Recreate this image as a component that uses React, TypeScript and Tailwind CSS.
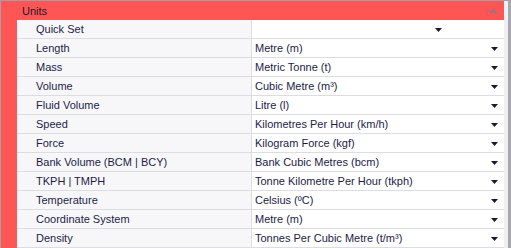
const rows: [string, string][] = [
  ['Quick Set', ''],
  ['Length', 'Metre (m)'],
  ['Mass', 'Metric Tonne (t)'],
  ['Volume', 'Cubic Metre (m³)'],
  ['Fluid Volume', 'Litre (l)'],
  ['Speed', 'Kilometres Per Hour (km/h)'],
  ['Force', 'Kilogram Force (kgf)'],
  ['Bank Volume (BCM | BCY)', 'Bank Cubic Metres (bcm)'],
  ['TKPH | TMPH', 'Tonne Kilometre Per Hour (tkph)'],
  ['Temperature', 'Celsius (ºC)'],
  ['Coordinate System', 'Metre (m)'],
  ['Density', 'Tonnes Per Cubic Metre (t/m³)'],
];

function DropArrow() {
  return (
    <svg width="7" height="4" viewBox="0 0 7 4" className="shrink-0">
      <path d="M0 0h7L3.5 4z" fill="#1a1a2e" />
    </svg>
  );
}

export default function App() {
  return (
    <div
      className="w-[511px] h-[248px] overflow-hidden flex border-t border-l border-[#a0a0a8] text-[11px] text-[#1c1c48]"
      style={{ fontFamily: '"Liberation Sans", Arial, sans-serif' }}
    >
      <div className="w-[503px] flex flex-col">
        {/* Category header */}
        <div className="h-[19px] shrink-0 bg-[#ff5555] flex items-center pl-[21px] pr-[6px] pt-[1px]">
          <span className="flex-1 text-[#1a1a2a]">Units</span>
          <svg width="9" height="6" viewBox="0 0 9 6">
            <path d="M0 5.5L4.5 1L9 5.5H6.5L4.5 3.5L2.5 5.5Z" fill="#7c7c92" />
          </svg>
        </div>

        <div className="flex flex-1">
          <div className="w-[16px] shrink-0 bg-[#ff5555]" />
          <div className="flex-1 flex flex-col">
            {rows.map(([label, value], i) => (
              <div key={i} className="h-[19px] shrink-0 flex border-b border-[#dcdce2]">
                <div className="w-[235px] shrink-0 bg-[#f7f7fa] pl-[19px] pt-[1px] flex items-center border-r border-[#dcdce2]">
                  {label}
                </div>
                <div className="flex-1 bg-white flex items-center pl-[3px] pr-[6px] pt-[1px]">
                  <span className="flex-1">{value}</span>
                  {i === 0 ? (
                    <span className="mr-[56px] flex">
                      <DropArrow />
                    </span>
                  ) : (
                    <DropArrow />
                  )}
                </div>
              </div>
            ))}
          </div>
        </div>
      </div>
      <div className="w-[4px] bg-[#f0f0f2]" />
      <div className="w-[3px] bg-[#a8a8b0]" />
    </div>
  );
}
